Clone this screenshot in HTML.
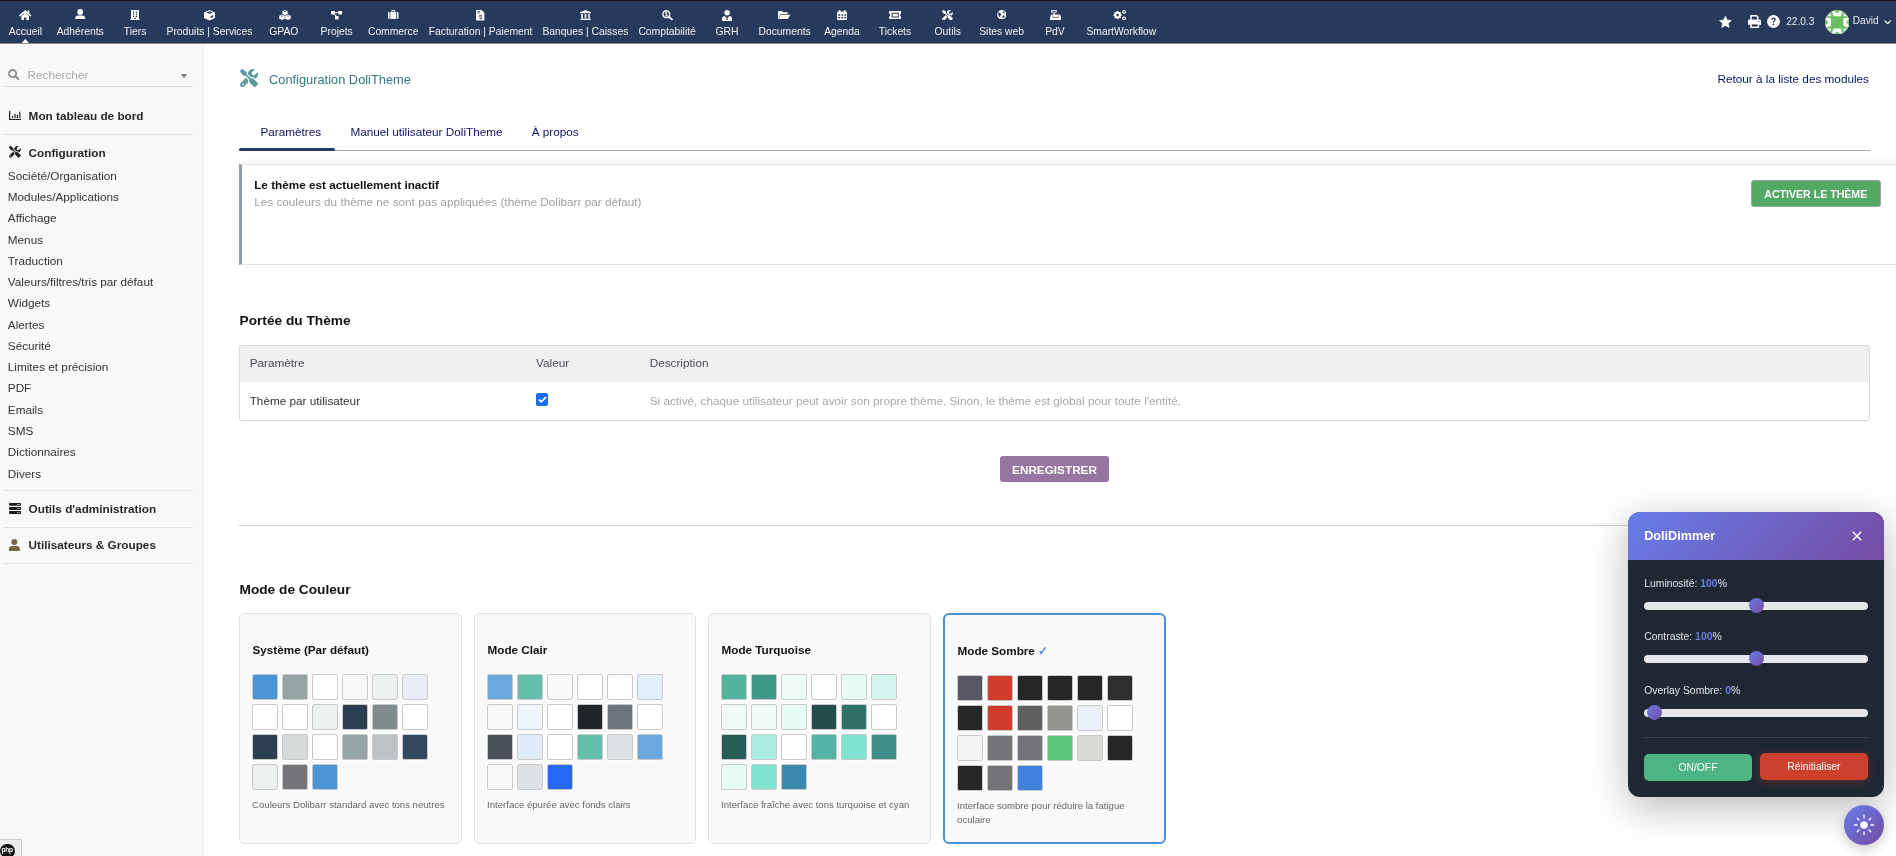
<!DOCTYPE html>
<html><head><meta charset="utf-8">
<style>
*{box-sizing:border-box;margin:0;padding:0}
html,body{width:1896px;height:856px;overflow:hidden;background:#fff;font-family:"Liberation Sans",sans-serif;color:#333}
.a{position:absolute}
.t{position:absolute;line-height:1;white-space:nowrap}
#topstrip{left:0;top:0;width:1896px;height:1px;background:#15130f}
#nav{left:0;top:1px;width:1896px;height:42px;background:#283a5b}
#navline{left:0;top:43px;width:1896px;height:1px;background:#8a8a8a}
.ni{position:absolute;top:26.9px;width:160px;text-align:center;font-size:10.33px;line-height:1;color:#f2f2f2;white-space:nowrap}
.nic{position:absolute;top:9px;width:14px;height:12px}
#side{left:0;top:45px;width:204px;height:811px;background:#f8f8f8;border-right:1px solid #ebebeb}
.si{font-size:11.76px;color:#333;left:7.8px}
.sh{font-size:11.76px;font-weight:bold;color:#282828;left:28.6px}
.sep{position:absolute;left:3.5px;width:189.5px;height:1px;background:#e3e3e3}
#wrap{will-change:transform}.sw{position:absolute;width:26px;height:26px;border:1px solid #c8c8c8;border-radius:2px;box-shadow:0 0 0 1px #fff}
</style></head><body><div id="wrap" style="position:absolute;left:0;top:0;width:1896px;height:856px">
<div id="topstrip" class="a"></div>
<div id="nav" class="a"></div>
<div id="navline" class="a"></div>

<!-- NAV ITEMS -->
<div id="navitems">
<div class="ni" style="left:-54.55px">Accueil</div>
<div class="ni" style="left:0.20px">Adhérents</div>
<div class="ni" style="left:55.10px">Tiers</div>
<div class="ni" style="left:129.50px">Produits | Services</div>
<div class="ni" style="left:203.80px">GPAO</div>
<div class="ni" style="left:256.70px">Projets</div>
<div class="ni" style="left:313.20px">Commerce</div>
<div class="ni" style="left:400.60px">Facturation | Paiement</div>
<div class="ni" style="left:505.35px">Banques | Caisses</div>
<div class="ni" style="left:587.10px">Comptabilité</div>
<div class="ni" style="left:647.00px">GRH</div>
<div class="ni" style="left:704.60px">Documents</div>
<div class="ni" style="left:762.00px">Agenda</div>
<div class="ni" style="left:815.00px">Tickets</div>
<div class="ni" style="left:867.70px">Outils</div>
<div class="ni" style="left:921.60px">Sites web</div>
<div class="ni" style="left:974.90px">PdV</div>
<div class="ni" style="left:1041.35px">SmartWorkflow</div>
</div>

<!-- ICONS -->
<!-- house -->
<svg class="a" style="left:19px;top:10px" width="12.5" height="10.5" viewBox="0 0 12.5 10.5"><path d="M0.9 5.6 L6.2 1.1 L11.5 5.6" stroke="#fff" stroke-width="1.5" fill="none" stroke-linecap="round"/><rect x="8.6" y="0.4" width="1.7" height="3.3" fill="#fff"/><path d="M2.4 6 L6.2 2.8 L10 6 V10 H7.3 V7.4 H5.1 V10 H2.4 Z" fill="#fff"/></svg>
<!-- person -->
<svg class="a" style="left:75px;top:9px" width="10.5" height="10.5" viewBox="0 0 10.5 10.5"><circle cx="5.2" cy="3" r="2.9" fill="#fff"/><path d="M0.2 10 Q0.2 6.6 3 6.4 H7.4 Q10.2 6.6 10.2 10 Z" fill="#fff"/></svg>
<!-- building -->
<svg class="a" style="left:130px;top:10px" width="10" height="10" viewBox="0 0 10 10"><rect x="1" y="0" width="8" height="9.4" fill="#fff"/><rect x="0.2" y="9" width="9.6" height="1" fill="#fff"/><g fill="#283a5b"><rect x="2.9" y="1.5" width="1.3" height="1.3"/><rect x="5.8" y="1.5" width="1.3" height="1.3"/><rect x="2.9" y="3.6" width="1.3" height="1.3"/><rect x="5.8" y="3.6" width="1.3" height="1.3"/><rect x="2.9" y="5.7" width="1.3" height="1.3"/><rect x="5.8" y="5.7" width="1.3" height="1.3"/><rect x="4.2" y="7.7" width="1.6" height="1.4"/></g></svg>
<!-- cube -->
<svg class="a" style="left:204px;top:10px" width="11" height="10.5" viewBox="0 0 11 10.5"><path d="M5.5 0 L11 2.4 V8 L5.5 10.4 L0 8 V2.4 Z" fill="#fff"/><path d="M2.3 2.5 L5.5 1.3 L8.7 2.5 L5.5 3.8 Z" fill="#283a5b"/><path d="M6.6 6.3 L9.2 5.1 V7 L6.6 8.2 Z" fill="#283a5b"/></svg>
<!-- cubes -->
<svg class="a" style="left:278.5px;top:10px" width="12" height="10.2" viewBox="0 0 12 10.2"><g fill="#fff"><path d="M6 0 L8.6 1.2 V4 L6 5.2 L3.4 4 V1.2 Z"/><path d="M3 4.6 L5.8 5.8 V8.8 L3 10 L0.2 8.8 V5.8 Z"/><path d="M9 4.6 L11.8 5.8 V8.8 L9 10 L6.2 8.8 V5.8 Z"/></g><g fill="#283a5b"><path d="M4.6 1.4 L6 0.8 L7.4 1.4 L6 2 Z"/><path d="M1.5 6 L3 5.4 L4.5 6 L3 6.6 Z"/><path d="M7.5 6 L9 5.4 L10.5 6 L9 6.6 Z"/></g></svg>
<!-- project -->
<svg class="a" style="left:331px;top:11px" width="11" height="8.5" viewBox="0 0 11 8.5"><g fill="#fff"><rect x="0" y="0" width="3.8" height="3.4"/><rect x="7.2" y="0" width="3.8" height="3.4"/><rect x="4" y="5" width="3.6" height="3.4"/><rect x="3.5" y="1.2" width="4" height="1"/><path d="M2.2 3 L5 5.5 L5.8 5 L3 2.5 Z"/></g></svg>
<!-- suitcase -->
<svg class="a" style="left:388px;top:10px" width="10.5" height="9" viewBox="0 0 10.5 9"><g fill="#fff"><path d="M3.4 2 V0.8 Q3.4 0 4.2 0 H6.3 Q7.1 0 7.1 0.8 V2 H6.2 V1 H4.3 V2 Z"/><rect x="0" y="2" width="1.6" height="6.9" rx="0.8"/><rect x="2.3" y="2" width="5.9" height="6.9"/><rect x="8.9" y="2" width="1.6" height="6.9" rx="0.8"/></g></svg>
<!-- invoice -->
<svg class="a" style="left:476px;top:10px" width="8.5" height="10.5" viewBox="0 0 8.5 10.5"><path d="M0 0.6 Q0 0 0.6 0 H5.6 L8.4 2.8 V9.8 Q8.4 10.4 7.8 10.4 H0.6 Q0 10.4 0 9.8 Z" fill="#fff"/><g fill="#283a5b"><rect x="1.3" y="1.2" width="2.6" height="0.8"/><rect x="1.3" y="2.6" width="2.6" height="0.8"/><path d="M4.2 4.4 h0.8 v0.6 q1.2 0.2 1.2 1 h-0.8 q0 -0.4 -0.7 -0.4 q-0.8 0 -0.8 0.5 q0 0.4 0.9 0.5 q1.5 0.2 1.5 1.2 q0 0.8 -1.3 1 v0.6 h-0.8 v-0.6 q-1.3 -0.2 -1.3 -1.1 h0.8 q0 0.5 0.9 0.5 q0.8 0 0.8 -0.5 q0 -0.4 -0.9 -0.5 q-1.5 -0.2 -1.5 -1.2 q0 -0.8 1.2 -1 Z"/></g></svg>
<!-- bank -->
<svg class="a" style="left:580px;top:10px" width="11" height="10.2" viewBox="0 0 11 10.2"><g fill="#fff"><path d="M5.5 0 L11 2.3 V3.3 H0 V2.3 Z"/><rect x="1.2" y="4" width="1.6" height="4.3"/><rect x="4.7" y="4" width="1.6" height="4.3"/><rect x="8.2" y="4" width="1.6" height="4.3"/><rect x="0.4" y="8.6" width="10.2" height="1.6"/></g></svg>
<!-- search dollar -->
<svg class="a" style="left:661.5px;top:10.2px" width="11" height="10.2" viewBox="0 0 11 10.2"><circle cx="4.3" cy="4.2" r="3.4" stroke="#fff" stroke-width="1.5" fill="none"/><path d="M6.8 6.7 L10.2 9.6" stroke="#fff" stroke-width="1.8" stroke-linecap="round"/><path d="M5.4 3 Q5.2 2.4 4.3 2.4 Q3.3 2.4 3.3 3.2 Q3.3 3.9 4.3 4.1 Q5.4 4.3 5.4 5.1 Q5.4 6 4.3 6 Q3.3 6 3.2 5.3 M4.3 1.8 V6.6" stroke="#fff" stroke-width="0.8" fill="none"/></svg>
<!-- user tie -->
<svg class="a" style="left:722px;top:9.8px" width="10.2" height="11" viewBox="0 0 10.2 11"><circle cx="5.1" cy="2.7" r="2.7" fill="#fff"/><path d="M0 10.9 V8.6 Q0 6.3 2.4 6.1 L5.1 8 L7.8 6.1 Q10.2 6.3 10.2 8.6 V10.9 Z" fill="#fff"/><path d="M4.5 6.6 H5.7 L5.4 7.3 L5.9 9.6 L5.1 10.3 L4.3 9.6 L4.8 7.3 Z" fill="#283a5b"/></svg>
<!-- folder open -->
<svg class="a" style="left:778.3px;top:10.9px" width="12.4" height="8.3" viewBox="0 0 12.4 8.3"><g fill="#fff"><path d="M0 8 V0.8 Q0 0 0.8 0 H3.8 L5 1.2 H9 Q9.8 1.2 9.8 2 V3 H2.6 Z"/><path d="M2.8 3.7 H12.4 L9.6 8.3 H0 Z"/></g></svg>
<!-- calendar -->
<svg class="a" style="left:837px;top:10px" width="10.4" height="10.4" viewBox="0 0 10.4 10.4"><g fill="#fff"><rect x="0" y="1.5" width="10.4" height="8.9" rx="1"/><rect x="2" y="0" width="1.4" height="2.5" rx="0.5"/><rect x="7" y="0" width="1.4" height="2.5" rx="0.5"/></g><g fill="#283a5b"><rect x="1.3" y="4.3" width="1.8" height="1.5"/><rect x="4.3" y="4.3" width="1.8" height="1.5"/><rect x="7.3" y="4.3" width="1.8" height="1.5"/><rect x="1.3" y="6.9" width="1.8" height="1.5"/><rect x="4.3" y="6.9" width="1.8" height="1.5"/><rect x="7.3" y="6.9" width="1.8" height="1.5"/></g></svg>
<!-- ticket -->
<svg class="a" style="left:889px;top:10.9px" width="12.4" height="8.3" viewBox="0 0 12.4 8.3"><path d="M0 0 H12.4 V2.6 Q11.2 2.8 11.2 4.15 Q11.2 5.5 12.4 5.7 V8.3 H0 V5.7 Q1.2 5.5 1.2 4.15 Q1.2 2.8 0 2.6 Z" fill="#fff"/><rect x="2.6" y="1.8" width="7.2" height="4.7" fill="#283a5b"/><rect x="3.6" y="2.8" width="5.2" height="2.7" fill="#fff"/></svg>
<!-- tools -->
<svg class="a" style="left:942.2px;top:9.6px" width="10.9" height="10.6" viewBox="0 0 512 512" preserveAspectRatio="none"><path fill="#fff" d="M78.6 5C69.1-2.4 55.6-1.5 47 7L7 47c-8.5 8.5-9.4 22-2.1 31.6l80 104c4.5 5.900 11.6 9.4 19 9.4h54.1l109 109c-14.7 29-10 65.4 14.3 89.6l112 112c12.5 12.5 32.8 12.5 45.3 0l64-64c12.5-12.5 12.5-32.8 0-45.3l-112-112c-24.2-24.2-60.6-29-89.6-14.3l-109-109V104c0-7.5-3.5-14.5-9.4-19L78.6 5zM19.9 396.1C7.2 408.8 0 426.1 0 444.1C0 481.6 30.4 512 67.9 512c18 0 35.3-7.2 48-19.9L233.7 374.3c-7.8-20.9-9-43.6-3.6-65.1l-61.7-61.7L19.9 396.1zM512 144c0-10.5-1.1-20.7-3.2-30.5c-2.4-11.2-16.1-14.1-24.2-6l-63.9 63.9c-3 3-7.1 4.7-11.3 4.7H352c-8.8 0-16-7.2-16-16V102.6c0-4.2 1.7-8.3 4.7-11.3l63.9-63.9c8.1-8.1 5.2-21.8-6-24.2C388.7 1.1 378.5 0 368 0C288.5 0 224 64.5 224 144l0 .8 85.3 85.3c36-9.1 75.8 .5 104 28.7L429 274.5c49-23 83-72.8 83-130.5zM56 432a24 24 0 1 1 48 0 24 24 0 1 1 -48 0z"/></svg>
<!-- globe -->
<svg class="a" style="left:996.6px;top:9.6px" width="9.6" height="9.4" viewBox="0 0 9.6 9.4"><circle cx="4.8" cy="4.7" r="4.7" fill="#fff"/><path d="M1.4 2.6 Q2.8 2.2 3.6 3.4 Q4.6 4.4 3.6 5.4 Q2.6 6 3.2 7.6 Q1.4 6.6 1.2 4.2 Z M5.6 1 Q7.6 1.4 8 3 Q6.8 3.6 6.2 2.6 Q5.2 2.2 5.6 1 Z M6 5.2 Q7.4 5 7.8 6.4 Q6.8 8 5.6 8.2 Q5.2 6.4 6 5.2 Z" fill="#283a5b"/></svg>
<!-- cash register -->
<svg class="a" style="left:1049.8px;top:10px" width="11.2" height="10.2" viewBox="0 0 11.2 10.2"><g fill="#fff"><rect x="1.2" y="0" width="5.5" height="2.6"/><rect x="3.4" y="2.6" width="1.2" height="2"/><path d="M1 4.6 H10.2 L11.2 8.2 V10.2 H0 V8.2 Z"/></g><rect x="2.2" y="0.8" width="3.5" height="1" fill="#283a5b"/><path d="M2.6 5.6 L3.3 7.4 H7.9 L8.6 5.6" stroke="#283a5b" stroke-width="0.7" fill="none"/></svg>
<!-- cogs -->
<svg class="a" style="left:1112.7px;top:10px" width="13.2" height="10.2" viewBox="0 0 13.2 10.2"><g fill="#fff"><circle cx="4.6" cy="5.1" r="3.3"/><rect x="3.8" y="1" width="1.6" height="8.2"/><rect x="0.5" y="4.3" width="8.2" height="1.6"/><rect x="3.8" y="1" width="1.6" height="8.2" transform="rotate(45 4.6 5.1)"/><rect x="3.8" y="1" width="1.6" height="8.2" transform="rotate(-45 4.6 5.1)"/><circle cx="11.1" cy="1.9" r="1.9"/><circle cx="11.1" cy="8.3" r="1.9"/></g><circle cx="4.6" cy="5.1" r="1.3" fill="#283a5b"/><circle cx="11.1" cy="1.9" r="0.8" fill="#283a5b"/><circle cx="11.1" cy="8.3" r="0.8" fill="#283a5b"/></svg>

<!-- active triangle -->
<svg class="a" style="left:20.6px;top:38.6px" width="8.6" height="4.5" viewBox="0 0 8.6 4.5"><path d="M4.3 0 L8.6 4.5 H0 Z" fill="#fff"/></svg>

<!-- right side -->
<svg class="a" style="left:1718.8px;top:15.5px" width="12.8" height="12.4" viewBox="0 0 24 23.2"><path d="M12 0.5 L15.3 7.6 L23.2 8.5 L17.3 13.8 L18.9 21.6 L12 17.7 L5.1 21.6 L6.7 13.8 L0.8 8.5 L8.7 7.6 Z" fill="#fff" stroke="#fff" stroke-width="1.2" stroke-linejoin="round"/></svg>
<svg class="a" style="left:1748px;top:15px" width="13.3" height="13" viewBox="0 0 13.3 13"><g fill="#fff"><path d="M2.2 0 H8.8 L10.6 1.8 V4.8 H9 V2.4 L8.2 1.6 H3.8 V4.8 H2.2 Z"/><rect x="0" y="4.6" width="13.3" height="5.4" rx="1.3"/><path d="M2.2 8 H11.1 V13 H2.2 Z"/></g><rect x="3.8" y="9.4" width="5.8" height="2.2" fill="#283a5b"/><circle cx="11" cy="6.6" r="0.6" fill="#283a5b"/></svg>
<svg class="a" style="left:1767px;top:14.8px" width="13" height="13" viewBox="0 0 13 13"><circle cx="6.5" cy="6.5" r="6.4" fill="#fff"/><path d="M4.3 4.9 Q4.3 2.6 6.6 2.6 Q8.8 2.6 8.8 4.5 Q8.8 5.6 7.6 6.2 Q7 6.6 7 7.5 H5.8 Q5.8 6 6.8 5.4 Q7.4 5 7.4 4.5 Q7.4 3.8 6.5 3.8 Q5.6 3.8 5.6 4.9 Z" fill="#283a5b"/><circle cx="6.4" cy="9.3" r="0.9" fill="#283a5b"/></svg>
<div class="t" style="left:1786.2px;top:16.6px;font-size:10.1px;color:#e8e8ee">22.0.3</div>
<svg class="a" style="left:1825px;top:9.6px" width="24.4" height="24.6" viewBox="0 0 24.4 24.6"><defs><clipPath id="cav"><circle cx="12.2" cy="12.3" r="12.1"/></clipPath></defs><circle cx="12.2" cy="12.3" r="12.2" fill="#c8d0d8"/><circle cx="12.2" cy="12.3" r="11.8" fill="#6abf5e"/><g clip-path="url(#cav)"><g fill="#fff"><path d="M6.9 0.8 L17.5 0.8 L15.9 6.2 L8.5 6.2 Z"/><path d="M6.9 23.8 L17.5 23.8 L15.9 18.4 L8.5 18.4 Z"/><path d="M0.6 7 L0.6 17.6 L6 16 L6 8.6 Z"/><path d="M23.8 7 L23.8 17.6 L18.4 16 L18.4 8.6 Z"/><path d="M5.8 3.4 L5.8 6.2 L2 6.2 Z"/><path d="M18.6 3.4 L18.6 6.2 L22.4 6.2 Z"/><path d="M5.8 21.2 L5.8 18.4 L2 18.4 Z"/><path d="M18.6 21.2 L18.6 18.4 L22.4 18.4 Z"/></g><g fill="#6abf5e"><path d="M8.5 0 L12.2 3.2 L15.9 0 Z"/><path d="M8.5 24.6 L12.2 21.4 L15.9 24.6 Z"/><path d="M0 8.6 L3.2 12.3 L0 16 Z"/><path d="M24.4 8.6 L21.2 12.3 L24.4 16 Z"/></g></g></svg>
<div class="t" style="left:1852.8px;top:16.2px;font-size:10.1px;color:#e8e8ee">David</div>
<svg class="a" style="left:1884px;top:19.6px" width="7.4" height="4.6" viewBox="0 0 7.4 4.6"><path d="M0.6 0.6 L3.7 3.7 L6.8 0.6" stroke="#fff" stroke-width="1.2" fill="none"/></svg>

<!-- SIDEBAR -->
<div id="side" class="a"></div>
<div class="t" style="left:27.6px;top:69px;font-size:11.76px;color:#aaa">Rechercher</div>
<div class="sep" style="top:86px;background:#dcdcdc"></div>
<div class="t sh" style="top:110.1px">Mon tableau de bord</div>
<div class="sep" style="top:134px"></div>
<div class="t sh" style="top:147.2px">Configuration</div>
<div class="t si" style="top:170px">Société/Organisation</div>
<div class="t si" style="top:191px">Modules/Applications</div>
<div class="t si" style="top:212px">Affichage</div>
<div class="t si" style="top:234px">Menus</div>
<div class="t si" style="top:255px">Traduction</div>
<div class="t si" style="top:276px">Valeurs/filtres/tris par défaut</div>
<div class="t si" style="top:297px">Widgets</div>
<div class="t si" style="top:319px">Alertes</div>
<div class="t si" style="top:340px">Sécurité</div>
<div class="t si" style="top:361px">Limites et précision</div>
<div class="t si" style="top:382px">PDF</div>
<div class="t si" style="top:404px">Emails</div>
<div class="t si" style="top:425px">SMS</div>
<div class="t si" style="top:446px">Dictionnaires</div>
<div class="t si" style="top:468px">Divers</div>
<div class="sep" style="top:490px"></div>
<div class="t sh" style="top:502.6px">Outils d'administration</div>
<div class="sep" style="top:527px"></div>
<div class="t sh" style="top:539.2px">Utilisateurs &amp; Groupes</div>
<div class="sep" style="top:563px"></div>



<!-- search icon -->
<svg class="a" style="left:7.9px;top:69px" width="11.4" height="10.8" viewBox="0 0 11.4 10.8"><circle cx="4.6" cy="4.6" r="3.6" stroke="#8c8c8c" stroke-width="1.8" fill="none"/><path d="M7.3 7.3 L10.4 10" stroke="#8c8c8c" stroke-width="2" stroke-linecap="round"/></svg>
<svg class="a" style="left:180.9px;top:73.7px" width="6" height="4.4" viewBox="0 0 6 4.4"><path d="M0 0 H6 L3 4.4 Z" fill="#777"/></svg>
<!-- chart icon -->
<svg class="a" style="left:9.2px;top:110.8px" width="12.2" height="9.2" viewBox="0 0 12.2 9.2"><g fill="#222"><rect x="0" y="0" width="1.2" height="9.2"/><rect x="0" y="8" width="12" height="1.2"/><rect x="3" y="5.2" width="1.2" height="2"/><rect x="5.4" y="2.8" width="1.2" height="4.4"/><rect x="7.8" y="3.8" width="1.2" height="3.4"/><rect x="10.2" y="0.8" width="1.2" height="6.4"/></g></svg>
<!-- config tools icon -->
<svg class="a" style="left:9.3px;top:146.2px" width="11.9" height="11.8" viewBox="0 0 512 512" preserveAspectRatio="none"><path fill="#222" d="M78.6 5C69.1-2.4 55.6-1.5 47 7L7 47c-8.5 8.5-9.4 22-2.1 31.6l80 104c4.5 5.900 11.6 9.4 19 9.4h54.1l109 109c-14.7 29-10 65.4 14.3 89.6l112 112c12.5 12.5 32.8 12.5 45.3 0l64-64c12.5-12.5 12.5-32.8 0-45.3l-112-112c-24.2-24.2-60.6-29-89.6-14.3l-109-109V104c0-7.5-3.5-14.5-9.4-19L78.6 5zM19.9 396.1C7.2 408.8 0 426.1 0 444.1C0 481.6 30.4 512 67.9 512c18 0 35.3-7.2 48-19.9L233.7 374.3c-7.8-20.9-9-43.6-3.6-65.1l-61.7-61.7L19.9 396.1zM512 144c0-10.5-1.1-20.7-3.2-30.5c-2.4-11.2-16.1-14.1-24.2-6l-63.9 63.9c-3 3-7.1 4.7-11.3 4.7H352c-8.8 0-16-7.2-16-16V102.6c0-4.2 1.7-8.3 4.7-11.3l63.9-63.9c8.1-8.1 5.2-21.8-6-24.2C388.7 1.1 378.5 0 368 0C288.5 0 224 64.5 224 144l0 .8 85.3 85.3c36-9.1 75.8 .5 104 28.7L429 274.5c49-23 83-72.8 83-130.5zM56 432a24 24 0 1 1 48 0 24 24 0 1 1 -48 0z"/></svg>
<!-- server icon -->
<svg class="a" style="left:9.3px;top:503px" width="12.2" height="11" viewBox="0 0 12.2 11"><g fill="#1a1a1a"><rect x="0" y="0" width="12.2" height="2.8" rx="0.8"/><rect x="0" y="4.1" width="12.2" height="2.8" rx="0.8"/><rect x="0" y="8.1" width="12.2" height="2.8" rx="0.8"/></g><g fill="#fff"><circle cx="10.2" cy="1.4" r="0.6"/><circle cx="8.6" cy="1.4" r="0.5"/><circle cx="10.2" cy="5.5" r="0.6"/><circle cx="8.6" cy="5.5" r="0.5"/><circle cx="10.2" cy="9.5" r="0.6"/><circle cx="8.6" cy="9.5" r="0.5"/></g></svg>
<!-- user icon brown -->
<svg class="a" style="left:9.3px;top:538.7px" width="10.8" height="12" viewBox="0 0 10.8 12"><circle cx="5.35" cy="3.1" r="3" fill="#7a6642"/><path d="M0 12 V10 Q0 7 3 7 H7.8 Q10.8 7 10.8 10 V12 Z" fill="#7a6642"/></svg>
<!-- title icon -->
<svg class="a" style="left:239.9px;top:69.1px" width="18.1" height="18.2" viewBox="0 0 512 512" preserveAspectRatio="none"><path fill="#5e9ba1" d="M78.6 5C69.1-2.4 55.6-1.5 47 7L7 47c-8.5 8.5-9.4 22-2.1 31.6l80 104c4.5 5.900 11.6 9.4 19 9.4h54.1l109 109c-14.7 29-10 65.4 14.3 89.6l112 112c12.5 12.5 32.8 12.5 45.3 0l64-64c12.5-12.5 12.5-32.8 0-45.3l-112-112c-24.2-24.2-60.6-29-89.6-14.3l-109-109V104c0-7.5-3.5-14.5-9.4-19L78.6 5zM19.9 396.1C7.2 408.8 0 426.1 0 444.1C0 481.6 30.4 512 67.9 512c18 0 35.3-7.2 48-19.9L233.7 374.3c-7.8-20.9-9-43.6-3.6-65.1l-61.7-61.7L19.9 396.1zM512 144c0-10.5-1.1-20.7-3.2-30.5c-2.4-11.2-16.1-14.1-24.2-6l-63.9 63.9c-3 3-7.1 4.7-11.3 4.7H352c-8.8 0-16-7.2-16-16V102.6c0-4.2 1.7-8.3 4.7-11.3l63.9-63.9c8.1-8.1 5.2-21.8-6-24.2C388.7 1.1 378.5 0 368 0C288.5 0 224 64.5 224 144l0 .8 85.3 85.3c36-9.1 75.8 .5 104 28.7L429 274.5c49-23 83-72.8 83-130.5zM56 432a24 24 0 1 1 48 0 24 24 0 1 1 -48 0z"/></svg>
<!-- php badge -->
<div class="a" style="left:0;top:839px;width:22px;height:17px;background:#ececec;border-top:1px solid #ccc;border-right:1px solid #ccc"></div>
<div class="a" style="left:0;top:843.5px;width:14.5px;height:14.5px;border-radius:50%;background:#111"></div>
<div class="t" style="left:1.6px;top:846.8px;font-size:6.5px;font-weight:bold;color:#fff;letter-spacing:-0.3px">php</div>

<!-- MAIN HEADER -->
<div class="t" style="left:269px;top:73.8px;font-size:12.84px;color:#2f7a83">Configuration DoliTheme</div>
<div class="t" style="left:1717px;top:73px;font-size:11.76px;color:#0a1464;width:152px;text-align:right">Retour à la liste des modules</div>
<div class="t" style="left:260.4px;top:125.8px;font-size:11.76px;color:#0a1464">Paramètres</div>
<div class="t" style="left:350.4px;top:125.8px;font-size:11.76px;color:#0a1464">Manuel utilisateur DoliTheme</div>
<div class="t" style="left:531.7px;top:125.8px;font-size:11.76px;color:#0a1464">À propos</div>
<div class="a" style="left:239px;top:150px;width:1631px;height:1px;background:#aaa"></div>
<div class="a" style="left:239px;top:148px;width:96px;height:3px;background:#263c5c;border-radius:2px"></div>

<!-- INFO BOX -->
<div class="a" style="left:239px;top:164px;width:1680px;height:101px;background:#fff;border-left:3px solid #8d9fa2;border-top:1px solid #e2e2e2;border-bottom:1px solid #e2e2e2;box-shadow:0 0 9px rgba(0,0,0,0.07)"></div>
<div class="t" style="left:254.2px;top:179px;font-size:11.76px;font-weight:bold;color:#111">Le thème est actuellement inactif</div>
<div class="t" style="left:254.2px;top:196px;font-size:11.76px;color:#a0a0a0">Les couleurs du thème ne sont pas appliquées (thème Dolibarr par défaut)</div>
<div class="a" style="left:1751px;top:180px;width:129.5px;height:26.5px;background:#52a865;border:1px solid #9aa89c;border-radius:3px"></div>
<div class="t" style="left:1751px;top:188.6px;width:129.5px;text-align:center;font-size:10.6px;font-weight:bold;color:#fff">ACTIVER LE THÈME</div>

<!-- PORTEE -->
<div class="t" style="left:239.5px;top:313.6px;font-size:13.7px;font-weight:bold;color:#111">Portée du Thème</div>
<div class="a" style="left:239px;top:345.4px;width:1631px;height:75.5px;border:1px solid #d9d9d9;border-radius:3px;overflow:hidden;background:#fff">
  <div class="a" style="left:0;top:0;width:100%;height:36px;background:#f0f0f0"></div>
</div>
<div class="t" style="left:249.7px;top:356.8px;font-size:11.76px;color:#4a4a5a">Paramètre</div>
<div class="t" style="left:536.1px;top:356.8px;font-size:11.76px;color:#4a4a5a">Valeur</div>
<div class="t" style="left:649.7px;top:356.8px;font-size:11.76px;color:#4a4a5a">Description</div>
<div class="t" style="left:249.7px;top:394.5px;font-size:11.76px;color:#333">Thème par utilisateur</div>
<div class="a" style="left:535.8px;top:393.4px;width:12.2px;height:12.2px;background:#1a6fe8;border-radius:2px"></div>
<svg class="a" style="left:535.8px;top:393.4px" width="13" height="13" viewBox="0 0 13 13"><path d="M3 6.6 L5.3 8.9 L10 4.1" stroke="#fff" stroke-width="1.7" fill="none"/></svg>
<div class="t" style="left:649.7px;top:394.5px;font-size:11.76px;color:#a8a8a8">Si activé, chaque utilisateur peut avoir son propre thème. Sinon, le thème est global pour toute l'entité.</div>

<!-- SAVE -->
<div class="a" style="left:1000px;top:456px;width:109px;height:26px;background:#9675a0;border-radius:3px"></div>
<div class="t" style="left:1000px;top:464.2px;width:109px;text-align:center;font-size:11.76px;font-weight:bold;color:#fff">ENREGISTRER</div>
<div class="a" style="left:239px;top:525px;width:1631px;height:1px;background:#cfcfcf"></div>

<!-- MODE -->
<div class="t" style="left:239.5px;top:582.9px;font-size:13.7px;font-weight:bold;color:#111">Mode de Couleur</div>
<div id="cards">
<div class="a" style="left:239px;top:613px;width:223px;height:231px;background:#f9f9f9;border:1px solid #e0e0e0;border-radius:6px"></div>
<div class="t" style="left:252.50px;top:644.4px;font-size:11.71px;font-weight:bold;color:#111">Système (Par défaut)</div>
<div class="sw" style="left:252px;top:674px;background:#4a94d8"></div>
<div class="sw" style="left:282px;top:674px;background:#95a5a6"></div>
<div class="sw" style="left:312px;top:674px;background:#ffffff"></div>
<div class="sw" style="left:342px;top:674px;background:#f9f9f9"></div>
<div class="sw" style="left:372px;top:674px;background:#ecf0f1"></div>
<div class="sw" style="left:402px;top:674px;background:#e8edf6"></div>
<div class="sw" style="left:252px;top:704px;background:#ffffff"></div>
<div class="sw" style="left:282px;top:704px;background:#ffffff"></div>
<div class="sw" style="left:312px;top:704px;background:#ecf0f1"></div>
<div class="sw" style="left:342px;top:704px;background:#2c3e50"></div>
<div class="sw" style="left:372px;top:704px;background:#7f8c8d"></div>
<div class="sw" style="left:402px;top:704px;background:#ffffff"></div>
<div class="sw" style="left:252px;top:734px;background:#2c3e50"></div>
<div class="sw" style="left:282px;top:734px;background:#d5dbdb"></div>
<div class="sw" style="left:312px;top:734px;background:#ffffff"></div>
<div class="sw" style="left:342px;top:734px;background:#95a5a6"></div>
<div class="sw" style="left:372px;top:734px;background:#bdc3c7"></div>
<div class="sw" style="left:402px;top:734px;background:#34495e"></div>
<div class="sw" style="left:252px;top:764px;background:#ecf0f1"></div>
<div class="sw" style="left:282px;top:764px;background:#757478"></div>
<div class="sw" style="left:312px;top:764px;background:#4a94d8"></div>
<div class="a" style="left:252.10px;top:798.2px;font-size:9.57px;line-height:13.4px;color:#666;width:200px">Couleurs Dolibarr standard avec tons neutres</div>
<div class="a" style="left:474px;top:613px;width:222px;height:231px;background:#f9f9f9;border:1px solid #e0e0e0;border-radius:6px"></div>
<div class="t" style="left:487.50px;top:644.4px;font-size:11.71px;font-weight:bold;color:#111">Mode Clair</div>
<div class="sw" style="left:487px;top:674px;background:#6aa8de"></div>
<div class="sw" style="left:517px;top:674px;background:#64c0aa"></div>
<div class="sw" style="left:547px;top:674px;background:#f8f9fa"></div>
<div class="sw" style="left:577px;top:674px;background:#ffffff"></div>
<div class="sw" style="left:607px;top:674px;background:#ffffff"></div>
<div class="sw" style="left:637px;top:674px;background:#e3effc"></div>
<div class="sw" style="left:487px;top:704px;background:#f8f9fa"></div>
<div class="sw" style="left:517px;top:704px;background:#eef5fc"></div>
<div class="sw" style="left:547px;top:704px;background:#ffffff"></div>
<div class="sw" style="left:577px;top:704px;background:#212529"></div>
<div class="sw" style="left:607px;top:704px;background:#6c757d"></div>
<div class="sw" style="left:637px;top:704px;background:#ffffff"></div>
<div class="sw" style="left:487px;top:734px;background:#495057"></div>
<div class="sw" style="left:517px;top:734px;background:#deebf8"></div>
<div class="sw" style="left:547px;top:734px;background:#ffffff"></div>
<div class="sw" style="left:577px;top:734px;background:#64c0aa"></div>
<div class="sw" style="left:607px;top:734px;background:#dee2e6"></div>
<div class="sw" style="left:637px;top:734px;background:#6aa8de"></div>
<div class="sw" style="left:487px;top:764px;background:#f8f9fa"></div>
<div class="sw" style="left:517px;top:764px;background:#dee2e6"></div>
<div class="sw" style="left:547px;top:764px;background:#2469f5"></div>
<div class="a" style="left:487.10px;top:798.2px;font-size:9.57px;line-height:13.4px;color:#666;width:200px">Interface épurée avec fonds clairs</div>
<div class="a" style="left:708px;top:613px;width:223px;height:231px;background:#f9f9f9;border:1px solid #e0e0e0;border-radius:6px"></div>
<div class="t" style="left:721.50px;top:644.4px;font-size:11.71px;font-weight:bold;color:#111">Mode Turquoise</div>
<div class="sw" style="left:721px;top:674px;background:#52b49a"></div>
<div class="sw" style="left:751px;top:674px;background:#3f9a83"></div>
<div class="sw" style="left:781px;top:674px;background:#eefbf7"></div>
<div class="sw" style="left:811px;top:674px;background:#ffffff"></div>
<div class="sw" style="left:841px;top:674px;background:#e8fcf6"></div>
<div class="sw" style="left:871px;top:674px;background:#d4f5ee"></div>
<div class="sw" style="left:721px;top:704px;background:#f0fbf9"></div>
<div class="sw" style="left:751px;top:704px;background:#eefbf9"></div>
<div class="sw" style="left:781px;top:704px;background:#e8fcf7"></div>
<div class="sw" style="left:811px;top:704px;background:#234d4a"></div>
<div class="sw" style="left:841px;top:704px;background:#2e7268"></div>
<div class="sw" style="left:871px;top:704px;background:#ffffff"></div>
<div class="sw" style="left:721px;top:734px;background:#265e57"></div>
<div class="sw" style="left:751px;top:734px;background:#a8ede0"></div>
<div class="sw" style="left:781px;top:734px;background:#ffffff"></div>
<div class="sw" style="left:811px;top:734px;background:#52b4a4"></div>
<div class="sw" style="left:841px;top:734px;background:#7ee3d0"></div>
<div class="sw" style="left:871px;top:734px;background:#3c9088"></div>
<div class="sw" style="left:721px;top:764px;background:#e8fcf6"></div>
<div class="sw" style="left:751px;top:764px;background:#7ee3d0"></div>
<div class="sw" style="left:781px;top:764px;background:#3a8aaf"></div>
<div class="a" style="left:721.10px;top:798.2px;font-size:9.57px;line-height:13.4px;color:#666;width:200px">Interface fraîche avec tons turquoise et cyan</div>
<div class="a" style="left:943px;top:613px;width:223px;height:231px;background:#f9f9f9;border:2px solid #4a90d9;border-radius:6px"></div>
<div class="t" style="left:957.50px;top:645.4px;font-size:11.71px;font-weight:bold;color:#111">Mode Sombre <span style="color:#4a90d9">✓</span></div>
<div class="sw" style="left:957px;top:675px;background:#5a5864"></div>
<div class="sw" style="left:987px;top:675px;background:#d03b2c"></div>
<div class="sw" style="left:1017px;top:675px;background:#272727"></div>
<div class="sw" style="left:1047px;top:675px;background:#272727"></div>
<div class="sw" style="left:1077px;top:675px;background:#272727"></div>
<div class="sw" style="left:1107px;top:675px;background:#2f2f2f"></div>
<div class="sw" style="left:957px;top:705px;background:#272727"></div>
<div class="sw" style="left:987px;top:705px;background:#d03b2c"></div>
<div class="sw" style="left:1017px;top:705px;background:#606060"></div>
<div class="sw" style="left:1047px;top:705px;background:#96948f"></div>
<div class="sw" style="left:1077px;top:705px;background:#eaf1f8"></div>
<div class="sw" style="left:1107px;top:705px;background:#ffffff"></div>
<div class="sw" style="left:957px;top:735px;background:#f4f3f2"></div>
<div class="sw" style="left:987px;top:735px;background:#747377"></div>
<div class="sw" style="left:1017px;top:735px;background:#747377"></div>
<div class="sw" style="left:1047px;top:735px;background:#5ac477"></div>
<div class="sw" style="left:1077px;top:735px;background:#dcdbd8"></div>
<div class="sw" style="left:1107px;top:735px;background:#272727"></div>
<div class="sw" style="left:957px;top:765px;background:#272727"></div>
<div class="sw" style="left:987px;top:765px;background:#747377"></div>
<div class="sw" style="left:1017px;top:765px;background:#4280e0"></div>
<div class="a" style="left:957.10px;top:799.2px;font-size:9.57px;line-height:13.4px;color:#666;width:200px">Interface sombre pour réduire la fatigue<br>oculaire</div>
</div>

<!-- POPUP -->
<div id="popup">

<div class="a" style="left:1628px;top:511.6px;width:255.8px;height:285.2px;border-radius:12px;background:#1f2733;box-shadow:0 10px 40px rgba(0,0,0,0.28);overflow:hidden">
  <div class="a" style="left:0;top:0;width:100%;height:48.8px;background:linear-gradient(135deg,#667eea 0%,#764ba2 100%)"></div>
</div>
<div class="t" style="left:1644.2px;top:529.6px;font-size:12.65px;font-weight:bold;color:#fff">DoliDimmer</div>
<svg class="a" style="left:1851px;top:530px" width="12" height="12" viewBox="0 0 12 12"><path d="M1.8 1.8 L10.2 10.2 M10.2 1.8 L1.8 10.2" stroke="#fff" stroke-width="1.5"/></svg>

<div class="t" style="left:1644.2px;top:579.1px;font-size:10.42px;color:#e2e4e8">Luminosité: <span style="color:#6b7fea;font-weight:bold">100</span>%</div>
<div class="a" style="left:1644px;top:602px;width:223.8px;height:8px;border-radius:4px;background:#e5e7eb"></div>
<div class="a" style="left:1749.1px;top:598px;width:14.8px;height:14.8px;border-radius:50%;background:linear-gradient(135deg,#667eea,#764ba2)"></div>

<div class="t" style="left:1644.2px;top:632.4px;font-size:10.42px;color:#e2e4e8">Contraste: <span style="color:#6b7fea;font-weight:bold">100</span>%</div>
<div class="a" style="left:1644px;top:655.4px;width:223.8px;height:8px;border-radius:4px;background:#e5e7eb"></div>
<div class="a" style="left:1749.1px;top:651.4px;width:14.8px;height:14.8px;border-radius:50%;background:linear-gradient(135deg,#667eea,#764ba2)"></div>

<div class="t" style="left:1644.2px;top:686.2px;font-size:10.42px;color:#e2e4e8">Overlay Sombre: <span style="color:#6b7fea;font-weight:bold">0</span>%</div>
<div class="a" style="left:1644px;top:709px;width:223.8px;height:8px;border-radius:4px;background:#e5e7eb"></div>
<div class="a" style="left:1647.4px;top:705px;width:14.8px;height:14.8px;border-radius:50%;background:linear-gradient(135deg,#667eea,#764ba2)"></div>

<div class="a" style="left:1644px;top:737px;width:224px;height:1px;background:#353d4a"></div>

<div class="a" style="left:1644px;top:754px;width:108px;height:27px;border-radius:5px;background:#4db584"></div>
<div class="t" style="left:1644px;top:763px;width:108px;text-align:center;font-size:10.3px;color:#fff">ON/OFF</div>
<div class="a" style="left:1760px;top:753.2px;width:107.8px;height:27px;border-radius:5px;background:#cc402e;box-shadow:0 2px 8px rgba(204,64,46,0.35)"></div>
<div class="t" style="left:1760px;top:762.1px;width:107.8px;text-align:center;font-size:10.3px;color:#fff">Réinitialiser</div>

<div class="a" style="left:1844px;top:805px;width:40px;height:40px;border-radius:50%;background:linear-gradient(135deg,#667eea,#764ba2);box-shadow:0 4px 12px rgba(0,0,0,0.2)"></div>
<svg class="a" style="left:1851.5px;top:812.6px" width="24" height="24" viewBox="0 0 24 24"><circle cx="12" cy="12" r="3.8" fill="#fff"/><g stroke="#fff" stroke-width="1.3" stroke-linecap="round"><path d="M12 2.5v2.5M12 19v2.5M2.5 12h2.5M19 12h2.5M5.3 5.3l1.8 1.8M16.9 16.9l1.8 1.8M5.3 18.7l1.8-1.8M16.9 7.1l1.8-1.8"/></g></svg>
</div>

</div></body></html>
